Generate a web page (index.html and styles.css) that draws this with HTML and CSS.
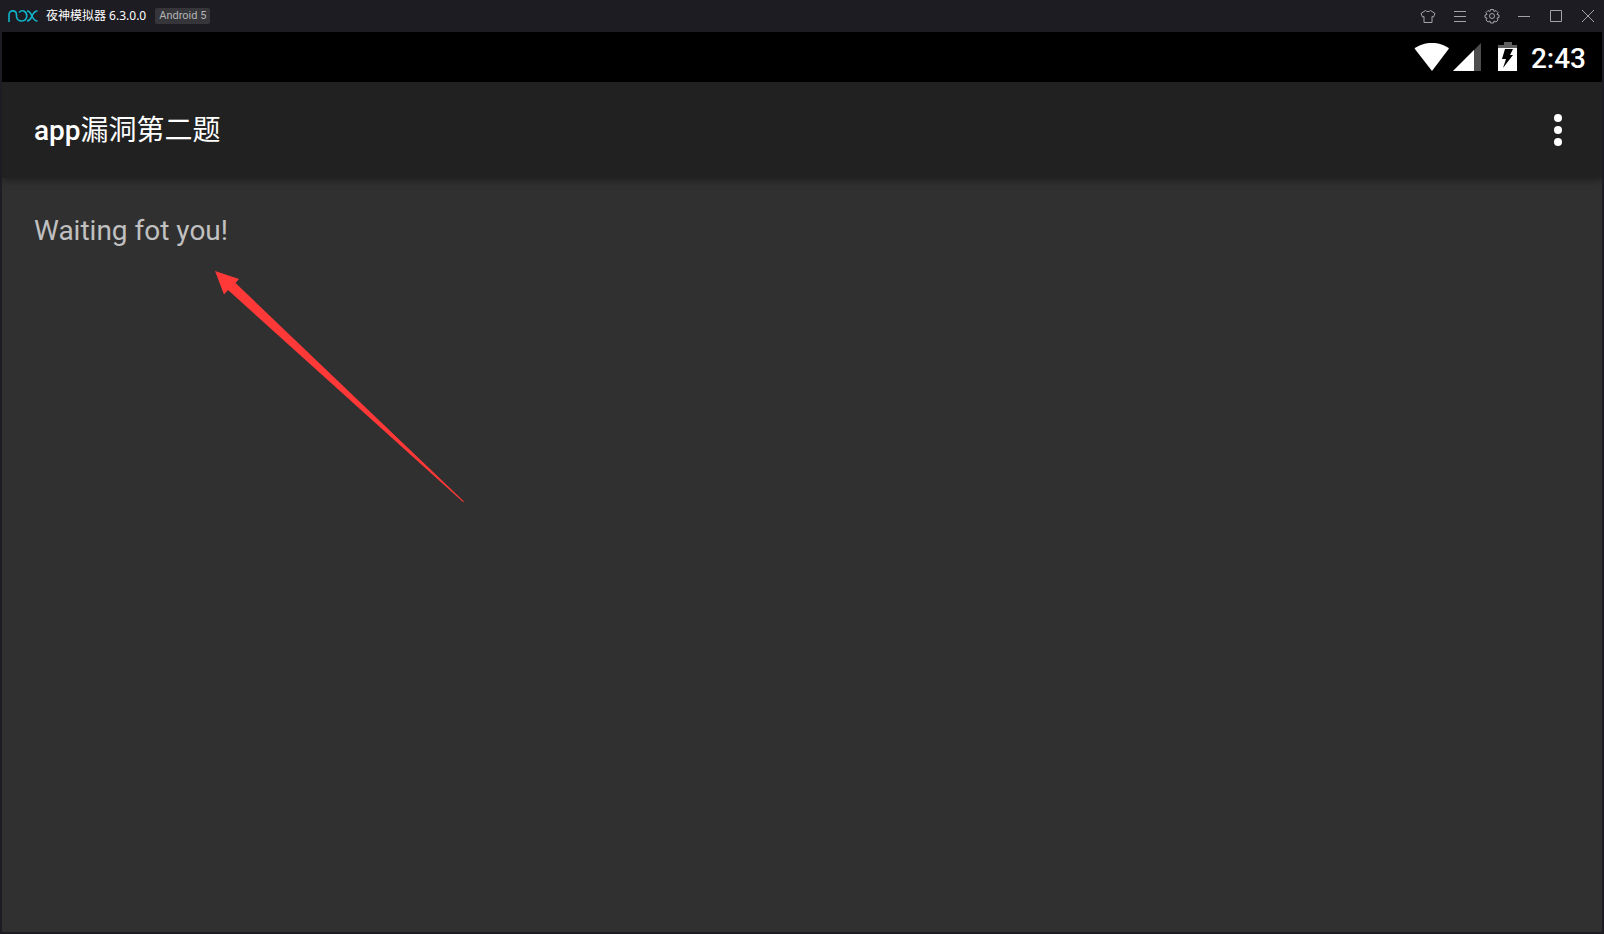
FILE: index.html
```html
<!DOCTYPE html>
<html lang="zh-CN">
<head>
<meta charset="utf-8">
<title>夜神模拟器</title>
<link rel="stylesheet" href="styles.css">
</head>
<body>
<div class="window">
  <header class="titlebar">
    <svg class="logo" width="31" height="14" viewBox="0 0 31 14" aria-hidden="true">
      <path d="M2 13V6C2 0.500 9.500 0.500 9.500 6V7.500C10 13.500 19.500 13.500 19.800 7C19.500 1.500 14.500 0.500 12 3.500"/>
      <path d="M20 2c3 0 3.500 2 5 5s2 5 5.500 5M30.500 2c-3.500 0-4 2-5.500 5s-2 5-5 5"/>
    </svg>
    <span class="product">夜神模拟器 6.3.0.0</span>
    <span class="badge">Android 5</span>
    <div class="controls">
      <button class="control" aria-label="Theme"><svg width="16" height="16" viewBox="0 0 16 16"><path d="M5.500 2.500L1 5.500L2.500 9L4 8.500V14.500H12V8.500L13.500 9L15 5.500L10.500 2.500C9.500 4 6.500 4 5.500 2.500Z"/></svg></button>
      <button class="control" aria-label="Menu"><svg width="16" height="16" viewBox="0 0 16 16"><path d="M2 3.500H14M2 8.500H14M2 13.500H14"/></svg></button>
      <button class="control" aria-label="Settings"><svg width="16" height="16" viewBox="0 0 16 16"><circle cx="8" cy="8" r="2.500"/><path d="M6.500 1.500h3l.5 2 2-1 2 2-1 2 2 .5v2.500l-2 .5 1 2-2 2-2-1-.5 2h-3l-.5-2-2 1-2-2 1-2-2-.5V7l2-.5-1-2 2-2 2 1z"/></svg></button>
      <button class="control" aria-label="Minimize"><svg width="16" height="16" viewBox="0 0 16 16"><path d="M2 8.500H14"/></svg></button>
      <button class="control" aria-label="Maximize"><svg width="16" height="16" viewBox="0 0 16 16"><path d="M2.500 2.500H13.500V13.500H2.500Z"/></svg></button>
      <button class="control" aria-label="Close"><svg width="16" height="16" viewBox="0 0 16 16"><path d="M2 2L14 14M14 2L2 14"/></svg></button>
    </div>
  </header>
  <div class="screen">
    <div class="statusbar">
      <svg width="104" height="30" viewBox="0 0 104 30" aria-hidden="true">
        <path fill="#fff" d="M0.500 6.500C9 -1 27 -1 35 6.500L18 29Z"/>
        <path fill="#4d4d4d" d="M67 1V29H39Z"/>
        <path fill="#fff" d="M60 8V29H39Z"/>
        <path fill="#606060" d="M90 0H98V3H103V6H84V3H90Z"/>
        <path fill="#fff" d="M84 6H103V29H84Z"/>
        <path fill="#000" d="M91 7H99L96 13H99L89 26L92 17H88Z"/>
      </svg>
      <time class="clock">2:43</time>
    </div>
    <div class="appbar">
      <h1 class="title">app<span class="title-cjk">漏洞第二题</span></h1>
      <button class="more" aria-label="More options">
        <svg width="8" height="32" viewBox="0 0 8 32"><circle cx="4" cy="4" r="4"/><circle cx="4" cy="16" r="4"/><circle cx="4" cy="28" r="4"/></svg>
      </button>
    </div>
    <main class="content">
      <p class="message">Waiting fot you!</p>
      <svg class="arrow" width="250" height="232" viewBox="0 0 250 232" aria-hidden="true"><path d="M0 0L24 8L20.500 12L249 230.500L248 231L13 19L9 23.500Z"/></svg>
    </main>
  </div>
</div>
</body>
</html>
```
FILE: styles.css
```css
* { box-sizing: border-box; }

body {
  margin: 0;
  background: #1d1c22;
  font-family: Roboto, "Noto Sans CJK SC", sans-serif;
}

button {
  display: flex;
  align-items: center;
  justify-content: center;
  padding: 0;
  border: 0;
  background: none;
}

.window {
  display: flex;
  flex-direction: column;
  min-height: 100vh;
}

.titlebar {
  display: flex;
  align-items: center;
  height: 32px;
  padding-left: 7px;
  color: #fff;
  font: 12px/16px "Noto Sans", "Noto Sans CJK SC", sans-serif;
}

.logo {
  fill: none;
  stroke: #10b4cb;
  stroke-width: 1.6;
}

.product { margin-left: 8px; }

.badge {
  margin-left: 9px;
  padding: 0 4px;
  border-radius: 2px;
  background: #35353a;
  color: #b4b4b6;
  font-family: Roboto, sans-serif;
  font-size: 11px;
}

.controls {
  display: flex;
  margin-left: auto;
}

.control {
  width: 32px;
  height: 32px;
}

.control svg {
  fill: none;
  stroke: #a4a4a7;
  stroke-width: 1;
}

.screen {
  display: flex;
  flex: 1;
  flex-direction: column;
  margin: 0 2px 2px;
  background: #303030;
}

.statusbar {
  display: flex;
  align-items: center;
  justify-content: flex-end;
  gap: 13px;
  height: 50px;
  padding-right: 16px;
  background: #000;
}

.clock {
  padding-top: 3px;
  color: #fff;
  font-size: 28px;
  font-weight: 500;
  line-height: 32px;
}

.appbar {
  display: flex;
  align-items: center;
  justify-content: space-between;
  height: 96px;
  padding: 0 20px 0 32px;
  background: #212121;
  box-shadow: 0 2px 8px rgba(0, 0, 0, 0.4);
  clip-path: inset(0 0 -12px 0);
}

.title {
  margin: 0;
  padding-top: 2px;
  color: #fff;
  font-size: 28px;
  font-weight: 500;
  line-height: 36px;
}

.title-cjk { font-weight: 400; }

.more {
  width: 48px;
  height: 48px;
}

.more svg { fill: #fff; }

.content {
  position: relative;
  flex: 1;
  padding: 33px 32px;
}

.message {
  margin: 0;
  color: #c0c0c0;
  font-size: 28px;
  line-height: 40px;
}

.arrow {
  position: absolute;
  top: 93px;
  left: 213px;
  fill: #ff3838;
}
```
